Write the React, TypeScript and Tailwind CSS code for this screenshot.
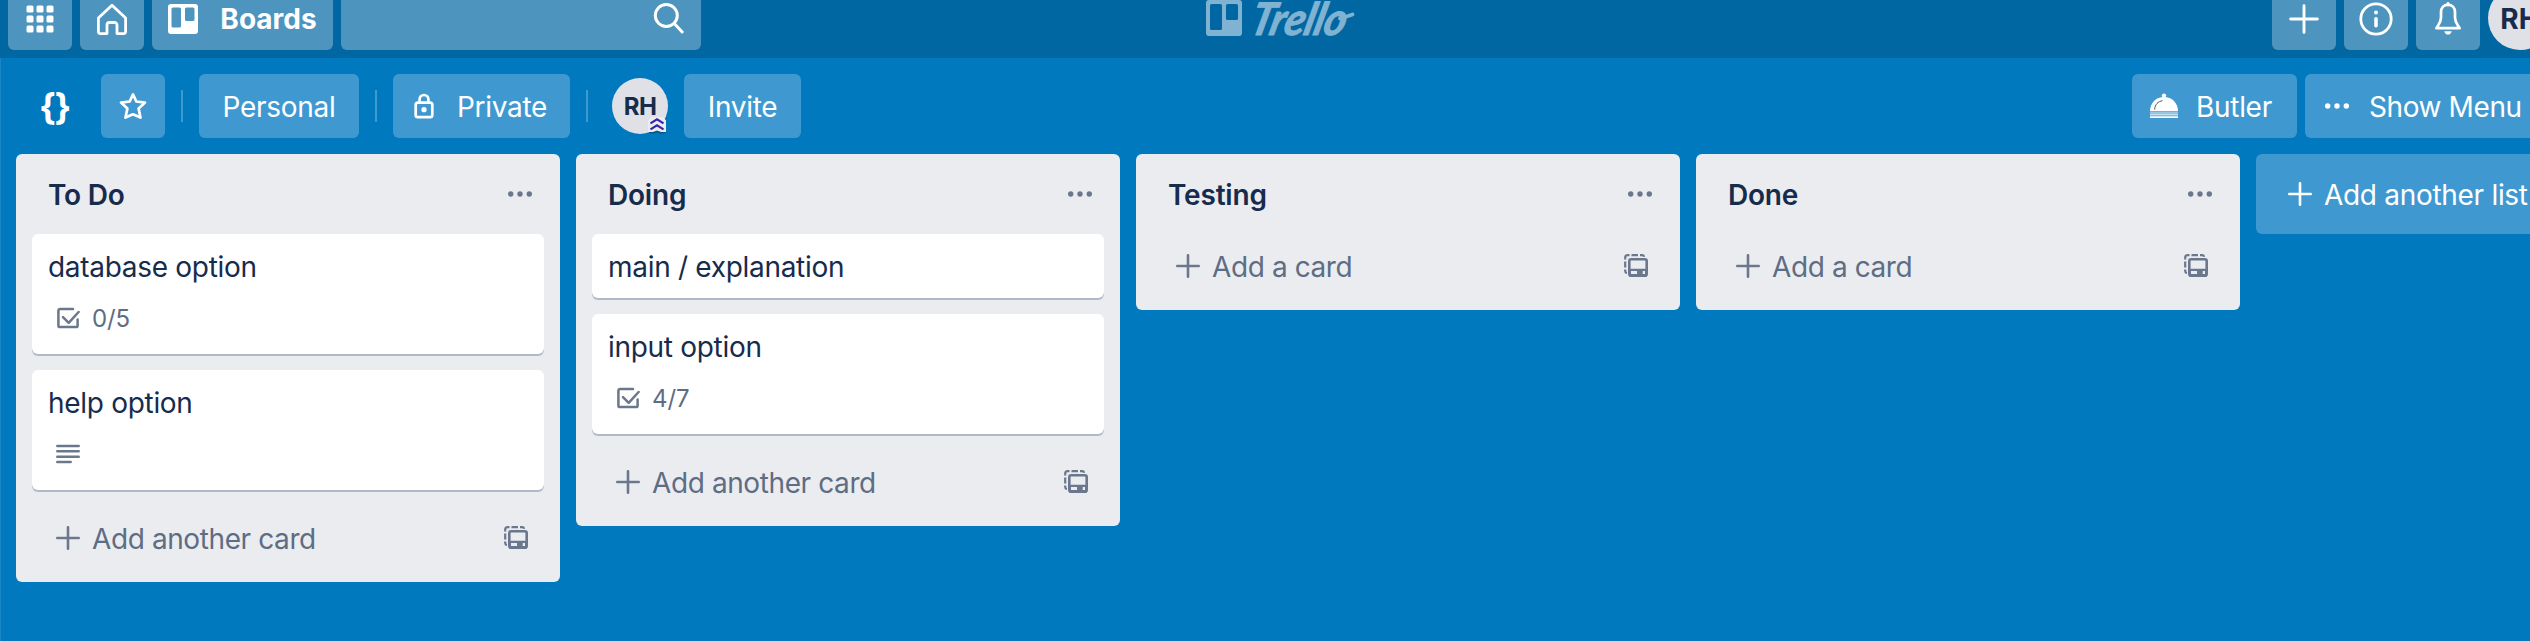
import React from "react";

const MoreDots = ({ className = "" }: { className?: string }) => (
  <svg width="24" height="6" viewBox="0 0 24 6" fill="currentColor" className={className}>
    <circle cx="2.7" cy="3" r="2.7" />
    <circle cx="12" cy="3" r="2.7" />
    <circle cx="21.3" cy="3" r="2.7" />
  </svg>
);

const Plus = ({ size, stroke = 2.6, className = "" }: { size: number; stroke?: number; className?: string }) => (
  <svg width={size} height={size} viewBox="0 0 24 24" fill="none" stroke="currentColor" strokeWidth={stroke} strokeLinecap="round" className={className}>
    <path d="M12 1.3v21.4M1.3 12h21.4" />
  </svg>
);

const TemplateIcon = () => (
  <svg width="24" height="24" viewBox="0 0 24 24" fill="none" stroke="currentColor" strokeWidth="2.6" className="shrink-0 text-[#6b778c]">
    <path strokeWidth="2.2" d="M1.200 5.500V3.600A2.400 2.400 0 0 1 3.600 1.200H5.500M7.500 1.200h6.500M16 1.200h2a2.200 2.200 0 0 1 2.200 1.600M1.200 7.500v6M1.200 15.500v1.500a2.400 2.400 0 0 0 1.700 2.300" />
    <rect x="5.300" y="5.300" width="17.400" height="16.400" rx="1.800" />
    <path fill="currentColor" fillRule="evenodd" stroke="none" d="M5 14.800h18v7H5zM7 17v3h6v-3zM18.700 17v3h2.300v-3z" />
  </svg>
);

const CheckIcon = () => (
  <svg width="24" height="24" viewBox="0 0 24 24" fill="none" stroke="currentColor" strokeWidth="2.5" strokeLinecap="round" strokeLinejoin="round">
    <path d="M17 3H4a1.600 1.600 0 0 0-1.600 1.600v14.800A1.600 1.600 0 0 0 4 21h16a1.600 1.600 0 0 0 1.600-1.600V13.500" />
    <path d="M7 11.200l5.700 5.600L22.600 6" />
  </svg>
);

const DescriptionIcon = () => (
  <svg width="24" height="20" viewBox="0 0 24 20" fill="none" stroke="currentColor" strokeWidth="2.500" strokeLinecap="round">
    <path d="M1.300 2h21.400M1.300 7.300h21.400M1.300 12.700h21.400M1.300 18h13.400" />
  </svg>
);

const BoardIcon = () => (
  <svg width="30" height="30" viewBox="0 0 30 30" fill="currentColor" fillRule="evenodd" className="relative top-[0.5px]">
    <path d="M3 0h24a3 3 0 0 1 3 3v24a3 3 0 0 1-3 3H3a3 3 0 0 1-3-3V3a3 3 0 0 1 3-3zM5 3.500a1.500 1.500 0 0 0-1.500 1.500v17a1.500 1.500 0 0 0 1.500 1.500h6.500A1.500 1.500 0 0 0 13 22V5a1.500 1.500 0 0 0-1.500-1.500zM18.500 3.500A1.500 1.500 0 0 0 17 5v10.500a1.500 1.500 0 0 0 1.500 1.500H25a1.500 1.500 0 0 0 1.500-1.500V5A1.500 1.500 0 0 0 25 3.500z" />
  </svg>
);

const HomeIcon = () => (
  <svg width="32" height="32" viewBox="0 0 32 32" fill="none" stroke="currentColor" strokeWidth="2.800" strokeLinejoin="round" className="relative top-[0.5px]">
    <path d="M16 2.200L2.400 15v13.600a2 2 0 0 0 2 2H11V22a2.500 2.500 0 0 1 2.500-2.500h5A2.500 2.500 0 0 1 21 22v8.600h6.600a2 2 0 0 0 2-2V15z" />
  </svg>
);

const BellIcon = () => (
  <svg width="28" height="34" viewBox="0 0 28 34" fill="none" stroke="currentColor" strokeWidth="2.700" strokeLinecap="round" strokeLinejoin="round">
    <path d="M14 3.800c-4.300 0-7 3-7 7.200v5.500c0 3.500-1 5.300-3 8.200l-1.700 2.500h23.400L24 24.700c-2-2.900-3-4.700-3-8.200V11c0-4.200-2.700-7.200-7-7.200z" />
    <path d="M14 2.700v1" strokeWidth="3.200" />
    <path d="M10.300 30.200h7.400c-.6 2.200-2 3.400-3.700 3.400s-3.100-1.200-3.700-3.400z" fill="currentColor" stroke="none" />
  </svg>
);

const InfoIcon = () => (
  <svg width="34" height="34" viewBox="0 0 34 34" fill="none" stroke="currentColor" strokeWidth="2.800" strokeLinecap="round" className="relative top-[0.5px]">
    <circle cx="17" cy="17" r="15.200" />
    <path d="M17 16.800v7" strokeWidth="3.600" />
    <circle cx="17" cy="10.400" r="2" fill="currentColor" stroke="none" />
  </svg>
);

const StarIcon = () => (
  <svg width="28" height="28" viewBox="0 0 28 28" fill="none" stroke="currentColor" strokeWidth="2.700" strokeLinejoin="round">
    <path d="M14 2.400L17.300 9.500L26 10.600L19.600 16.400L21.500 25.600L14 22.300L6.500 25.600L8.400 16.400L2 10.600L10.700 9.500Z" />
  </svg>
);

const LockIcon = () => (
  <svg width="20" height="26" viewBox="0 0 20 26" fill="none" stroke="currentColor" strokeWidth="2.700">
    <rect x="1.700" y="9.600" width="16.600" height="14.600" rx="2.200" />
    <path d="M5.600 9.600V6.400a4.400 4.400 0 0 1 8.800 0v3.200" />
    <circle cx="10" cy="16.700" r="2.600" fill="currentColor" stroke="none" />
  </svg>
);

const ButlerIcon = () => (
  <svg width="28" height="26" viewBox="0 0 28 26" fill="currentColor">
    <circle cx="14" cy="2.600" r="2.200" />
    <path d="M0 18.300C0 10 6 4 14 4s14 6 14 14.300z" />
    <path d="M4.600 16.500C5 11.500 8 8.500 12.500 7.700" fill="none" stroke="#4b5563" strokeWidth="1" />
    <path d="M0 19h28v1.300H0z" opacity=".45" />
    <path d="M0 20.500h28v2H0z" opacity=".7" />
    <path d="M0 23.200h28v1.800H0z" opacity=".95" />
  </svg>
);

const TrelloLogo = () => (
  <svg width="150" height="38" viewBox="0 0 150 38" fill="currentColor" className="block">
    <path fillRule="evenodd" d="M3 0h30a3 3 0 0 1 3 3v30a3 3 0 0 1-3 3H3a3 3 0 0 1-3-3V3a3 3 0 0 1 3-3zM5.500 4A1.500 1.500 0 0 0 4 5.500v23A1.500 1.500 0 0 0 5.500 30h9a1.500 1.500 0 0 0 1.500-1.500v-23A1.500 1.500 0 0 0 14.500 4zM21.500 4A1.500 1.500 0 0 0 20 5.500v13a1.500 1.500 0 0 0 1.500 1.500h9a1.500 1.500 0 0 0 1.500-1.500v-13A1.500 1.500 0 0 0 30.500 4z" />
    <text x="40" y="35" textLength="95" lengthAdjust="spacingAndGlyphs" strokeLinejoin="round" className="stroke-current stroke-1 font-['Lato',sans-serif] text-[45px] font-bold italic" transform="translate(11 0) skewX(-14)">Trello</text>
    <path d="M134 18.500q7-2 12.500-4" fill="none" stroke="currentColor" strokeWidth="3.800" strokeLinecap="round" />
  </svg>
);

type Card = { title: string; checklist?: string; description?: boolean };
type ListData = { title: string; cards: Card[] };

const lists: ListData[] = [
  { title: "To Do", cards: [{ title: "database option", checklist: "0/5" }, { title: "help option", description: true }] },
  { title: "Doing", cards: [{ title: "main / explanation" }, { title: "input option", checklist: "4/7" }] },
  { title: "Testing", cards: [] },
  { title: "Done", cards: [] },
];

const CardView = ({ card }: { card: Card }) => (
  <div className="mb-4 rounded-md bg-white px-4 pt-[13px] pb-1 shadow-[0_2px_0_#b1b9c8]">
    <div className="mb-[7px] h-10 leading-10 whitespace-nowrap text-[#172b4d]">{card.title}</div>
    {(card.checklist || card.description) && (
      <div className="flex h-14 items-start pt-1 pl-2 text-[#6b778c]">
        <div className="flex h-10 items-center">
          {card.checklist ? <CheckIcon /> : <DescriptionIcon />}
          <span className="pt-0.5 pl-3 text-2xl tracking-[-0.1px] text-[#5e6c84]">{card.checklist}</span>
        </div>
      </div>
    )}
  </div>
);

const ListView = ({ list }: { list: ListData }) => (
  <div className="flex w-[544px] shrink-0 flex-col rounded-md bg-[#ebecf0] px-4">
    <div className="flex h-20 items-center justify-between pr-3 pl-4">
      <span className="pt-0.5 font-semibold tracking-[-0.2px] text-[#172b4d]">{list.title}</span>
      <MoreDots className="text-[#6b778c]" />
    </div>
    {list.cards.map((c) => (
      <CardView key={c.title} card={c} />
    ))}
    <div className="flex h-[76px] items-start pr-4 pl-6">
      <div className="flex h-16 flex-1 items-center gap-3 whitespace-nowrap text-[#5e6c84]">
        <Plus size={24} className="text-[#6b778c]" />
        <span className="pt-0.5 tracking-[-0.4px]">{list.cards.length ? "Add another card" : "Add a card"}</span>
      </div>
      <div className="flex h-16 items-center">
        <TemplateIcon />
      </div>
    </div>
  </div>
);

const headerBtn = "flex h-16 shrink-0 items-center justify-center rounded-md bg-[#4d95bf]";
const boardBtn = "flex h-16 shrink-0 items-center rounded-md bg-[#3f99d0] whitespace-nowrap";
const Divider = () => <div className="mx-4 h-8 w-0.5 shrink-0 bg-[#3f99d0]" />;

const gridSteps = [0.5, 10.5, 20.5];

const Header = () => (
  <header className="flex h-[58px] items-end gap-2 overflow-hidden bg-[#0067a3] pb-2 pl-2">
    <div className={`${headerBtn} w-16`}>
      <svg width="28" height="28" viewBox="0 0 28 28" fill="currentColor" className="relative top-[0.5px]">
        {gridSteps.map((y) => gridSteps.map((x) => <rect key={`${x}-${y}`} x={x} y={y} width="7" height="7" rx="1.5" />))}
      </svg>
    </div>
    <div className={`${headerBtn} w-16`}>
      <HomeIcon />
    </div>
    <div className={`${headerBtn} w-[181px] gap-[22px] font-bold tracking-normal`}>
      <BoardIcon />
      <span className="pt-0.5">Boards</span>
    </div>
    <div className={`${headerBtn} w-[360px] justify-end pr-4`}>
      <svg width="32" height="32" viewBox="0 0 32 32" fill="none" stroke="currentColor" strokeWidth="3" strokeLinecap="round">
        <circle cx="13.300" cy="13.500" r="11" />
        <path d="M21.500 21.800l7.700 8.200" />
      </svg>
    </div>
    <div className="flex flex-1 items-start self-stretch pl-[497px] text-[#80b3d1]">
      <TrelloLogo />
    </div>
    <div className="flex w-[258px] shrink-0 gap-2 self-end">
      <div className={`${headerBtn} w-16`}>
        <Plus size={30} stroke={2.3} className="relative top-[0.5px]" />
      </div>
      <div className={`${headerBtn} w-16`}>
        <InfoIcon />
      </div>
      <div className={`${headerBtn} w-16`}>
        <BellIcon />
      </div>
      <div className="flex size-16 shrink-0 items-center justify-center rounded-full bg-[#dfe1e6] pt-0.5 font-bold tracking-normal text-[#172b4d]">RH</div>
    </div>
  </header>
);

const MemberAvatar = () => (
  <div className="relative mr-4 ml-2 flex size-14 shrink-0 items-center justify-center rounded-full bg-[#dfe1e6] pt-0.5 text-2xl font-bold tracking-[-0.5px] text-[#172b4d]">
    RH
    <svg width="18" height="17" viewBox="0 0 18 17" fill="none" className="absolute right-0.5 bottom-0">
      <path d="M1 14h17v2l-5 .8-4-1.300-4 1.300-4-.8z" fill="#172b4d" opacity=".45" />
      <path d="M0 3.500L3 0h12l3 3.500V15H13l-4-1.500L5 15H0z" fill="#ebecf0" />
      <path d="M2.500 6.400L9 2.400l6.500 4M2.500 12.400L9 8.400l6.500 4" stroke="#3626a7" strokeWidth="2.200" />
    </svg>
  </div>
);

const BoardBar = () => (
  <div className="flex h-24 items-center pl-[39px]">
    <span className="w-[62px] pt-0.5 text-[36px] leading-none font-bold tracking-[-1.5px]">{"{}"}</span>
    <div className={`${boardBtn} w-16 justify-center`}>
      <StarIcon />
    </div>
    <Divider />
    <div className={`${boardBtn} w-40 justify-center pt-0.5`}>Personal</div>
    <Divider />
    <div className={`${boardBtn} w-[177px] gap-[23px] pl-[21px]`}>
      <LockIcon />
      <span className="pt-0.5">Private</span>
    </div>
    <Divider />
    <MemberAvatar />
    <div className={`${boardBtn} w-[117px] justify-center pt-0.5`}>Invite</div>
    <div className="ml-auto flex w-[398px] shrink-0 gap-2 overflow-hidden">
      <div className={`${boardBtn} w-[165px] gap-[18px] pl-[18px]`}>
        <ButlerIcon />
        <span className="pt-0.5">Butler</span>
      </div>
      <div className={`${boardBtn} w-[240px] gap-5 pl-5`}>
        <MoreDots />
        <span className="pt-0.5 tracking-[-0.4px]">Show Menu</span>
      </div>
    </div>
  </div>
);

export default function App() {
  return (
    <div className="h-[641px] w-[2530px] overflow-hidden bg-[#0079bf] font-['Inter',sans-serif] text-[28px] tracking-[-0.3px] text-white shadow-[inset_1px_0_0_#1a86c6]">
      <Header />
      <BoardBar />
      <div className="flex items-start gap-4 pl-4">
        {lists.map((l) => (
          <ListView key={l.title} list={l} />
        ))}
        <div className="flex h-20 w-[544px] shrink-0 items-center gap-3 rounded-md bg-[#3f99d0] pl-8 whitespace-nowrap">
          <Plus size={24} />
          <span className="pt-0.5">Add another list</span>
        </div>
      </div>
    </div>
  );
}
